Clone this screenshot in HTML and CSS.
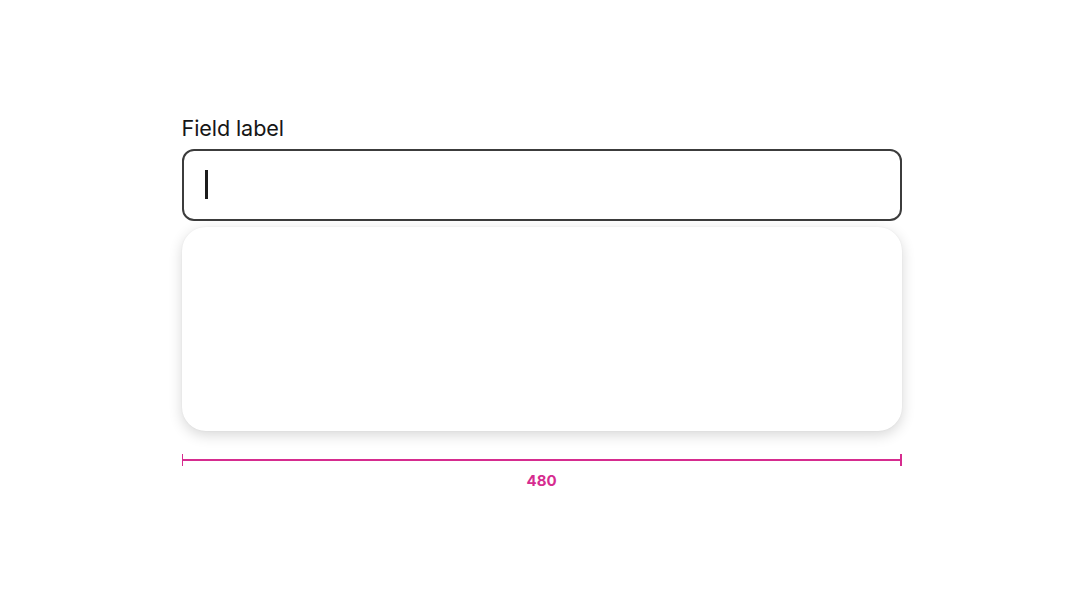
FILE: index.html
```html
<!DOCTYPE html>
<html>
<head>
<meta charset="utf-8">
<link rel="stylesheet" href="styles.css">
</head>
<body>
<div class="field">
  <label class="label">Field label</label>
  <div class="input"><span class="caret"></span></div>
  <div class="menu"></div>
  <div class="measure">
    <div class="rule"><span class="tick"></span><span class="line"></span><span class="tick"></span></div>
    <div class="measure-text">480</div>
  </div>
</div>
</body>
</html>
```
FILE: styles.css
```css
html, body {
  margin: 0;
  padding: 0;
  background: #ffffff;
}
body {
  font-family: Inter, "Noto Sans", sans-serif;
  color: #1a1a1a;
}
.field {
  width: 720px;
  margin: 0 auto;
  padding-top: 114px;
  display: flex;
  flex-direction: column;
}
.label {
  display: block;
  font-size: 21.6px;
  line-height: 28px;
  height: 28px;
  margin-bottom: 7px;
  letter-spacing: -0.1px;
  color: #161616;
}
.input {
  box-sizing: border-box;
  height: 72px;
  border: 2px solid #3c3c3c;
  border-radius: 12px;
  display: flex;
  align-items: center;
  padding-left: 21px;
}
.caret {
  display: block;
  width: 3px;
  height: 29px;
  background: #1c1c1c;
  margin-top: -2px;
}
.menu {
  margin-top: 6px;
  height: 204px;
  border-radius: 24px;
  background: #fff;
  box-shadow: 0 4px 14px rgba(0, 0, 0, 0.16), 0 0 2px rgba(0, 0, 0, 0.05);
}
.measure {
  margin-top: 23px;
  display: flex;
  flex-direction: column;
  align-items: stretch;
}
.rule {
  display: flex;
  align-items: center;
  height: 12px;
}
.tick {
  width: 1.5px;
  height: 12px;
  background: #d62c8f;
}
.line {
  flex: 1;
  height: 1.5px;
  background: #d62c8f;
}
.measure-text {
  text-align: center;
  font-size: 15px;
  font-weight: 700;
  line-height: 18px;
  margin-top: 6px;
  color: #d62c8f;
}
```
